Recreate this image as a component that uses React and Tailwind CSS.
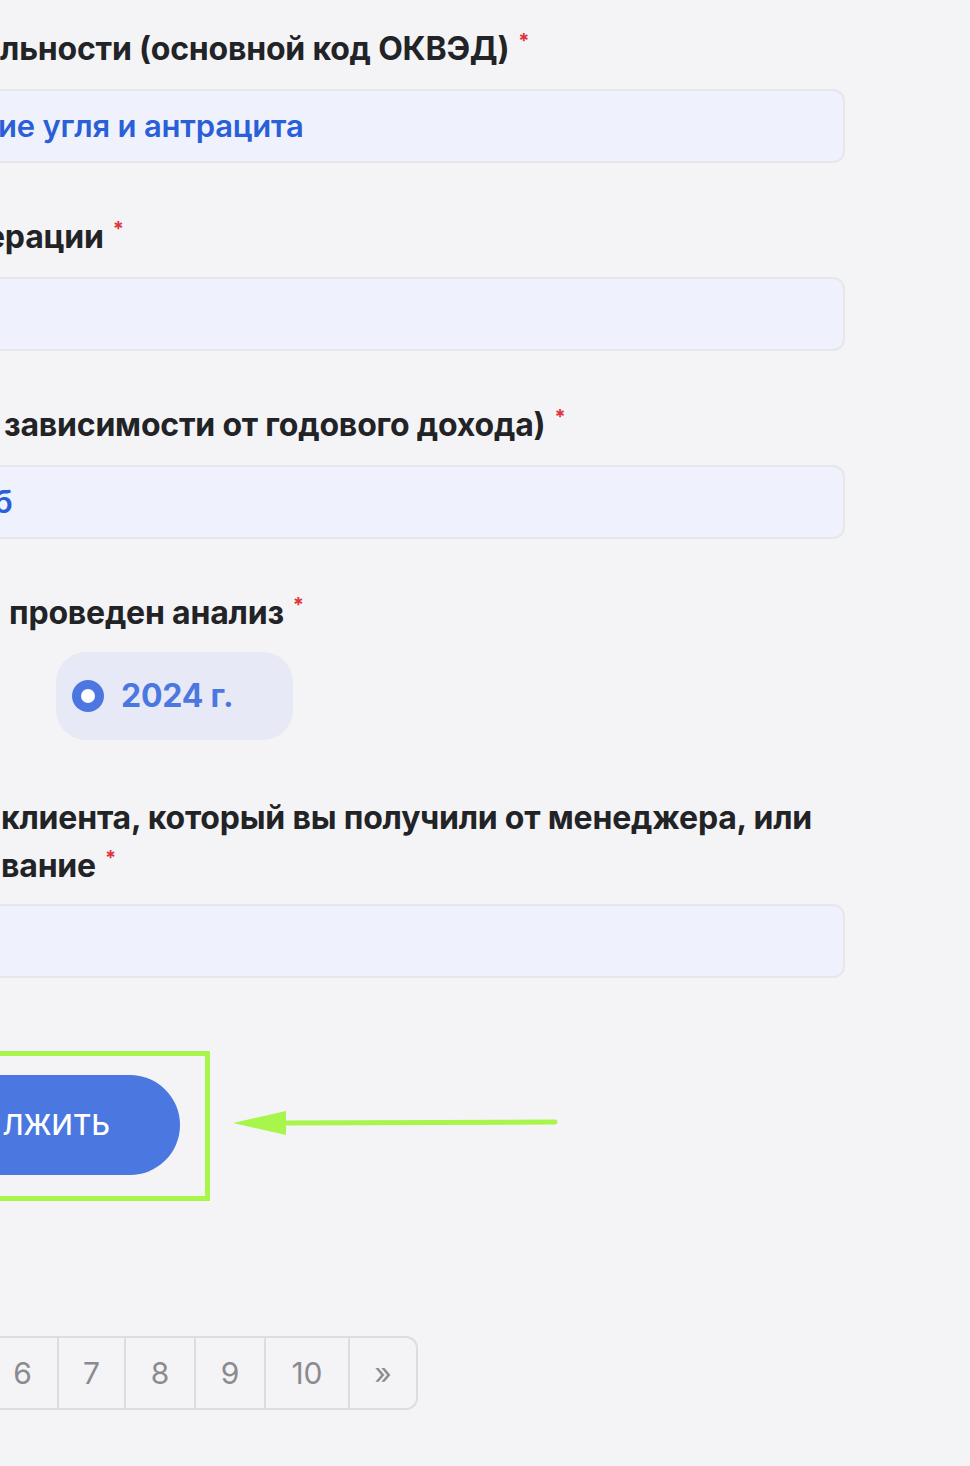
import React from "react";

const Star = () => (
  <span className="ml-[9px] text-[20px] leading-none text-[#e0343d] align-[12px]">*</span>
);

const Label = ({ children, className = "" }) => (
  <div
    className={
      "pt-px text-[32px] leading-[48px] font-bold text-[#222326] whitespace-nowrap tracking-[-0.2px] " +
      className
    }
  >
    {children}
  </div>
);

const Field = ({ value, textOffset = "" }) => (
  <div className="h-[74px] -ml-[40px] rounded-[12px] border-2 border-[#e7e7eb] bg-[#eff2fc] flex items-center overflow-hidden">
    {value && (
      <span
        className={
          "text-[31px] font-semibold text-[#2b5fd8] whitespace-nowrap tracking-[-0.2px] " +
          textOffset
        }
      >
        {value}
      </span>
    )}
  </div>
);

const pages = [
  { label: "6", w: "w-[75px]" },
  { label: "7", w: "w-[67px]" },
  { label: "8", w: "w-[70px]" },
  { label: "9", w: "w-[70px]" },
  { label: "10", w: "w-[84px]" },
  { label: "»", w: "w-[68px]" },
];

export default function App() {
  return (
    <div className="w-[970px] h-[1466px] overflow-hidden bg-[#f4f4f6] font-['Inter',sans-serif]">
      <div className="flex flex-col pt-[24px] pr-[125px]">
        {/* ОКВЭД */}
        <Label>
          льности (основной код ОКВЭД)
          <Star />
        </Label>
        <div className="mt-[16px]">
          <Field value="ие угля и антрацита" textOffset="ml-[36px]" />
        </div>

        {/* регион */}
        <Label className="mt-[49px] -ml-[14px]">
          ерации
          <Star />
        </Label>
        <div className="mt-[16px]">
          <Field />
        </div>

        {/* доход */}
        <Label className="mt-[49px] ml-[4px]">
          зависимости от годового дохода)
          <Star />
        </Label>
        <div className="mt-[16px]">
          <Field value="б" textOffset="ml-[32px]" />
        </div>

        {/* год анализа */}
        <Label className="mt-[49px] ml-[9px]">
          проведен анализ
          <Star />
        </Label>
        <div className="mt-[15px] ml-[56px] w-[237px] h-[88px] rounded-[30px] bg-[#e8e9f6] flex items-center pl-4 gap-[17px]">
          <div className="w-[32px] h-[32px] rounded-full bg-[#4a78e0] flex items-center justify-center">
            <div className="w-[14px] h-[14px] rounded-full bg-white" />
          </div>
          <span className="text-[32px] font-bold text-[#4a78e0] tracking-[-0.2px]">2024 г.</span>
        </div>

        {/* код клиента */}
        <Label className="mt-[53px] ml-[1px]">
          клиента, который вы получили от менеджера, или
          <br />
          вание
          <Star />
        </Label>
        <div className="mt-[14px]">
          <Field />
        </div>

        {/* кнопка */}
        <div className="mt-[73px] flex items-center">
          <div className="-ml-[100px] w-[310px] h-[150px] border-[5px] border-[#a8f54c] flex items-center justify-end pr-[25px] pb-[3px]">
            <button className="w-[300px] h-[100px] rounded-full bg-[#4a78e0] text-white text-[28px] font-medium flex items-center justify-end pr-[70px] tracking-[0.2px]">
              ЛЖИТЬ
            </button>
          </div>
          <svg width="330" height="30" viewBox="0 0 330 30" className="ml-[23px] -mt-[7px]">
            <line x1="50" y1="15" x2="322" y2="14" stroke="#a8f54c" strokeWidth="5" strokeLinecap="round" />
            <polygon points="0,15 53,3 53,27" fill="#a8f54c" />
          </svg>
        </div>

        {/* пагинация */}
        <div className="mt-[135px] -ml-[20px] self-start flex h-[74px] border-2 border-[#dcdde2] rounded-r-[12px] text-[30px] text-[#8b8b8f]">
          {pages.map((p, i) => (
            <div
              key={p.label}
              className={
                "flex items-center justify-center " +
                p.w +
                (i > 0 ? " border-l-2 border-[#dcdde2]" : " pl-[6px]")
              }
            >
              {p.label}
            </div>
          ))}
        </div>
      </div>
    </div>
  );
}
